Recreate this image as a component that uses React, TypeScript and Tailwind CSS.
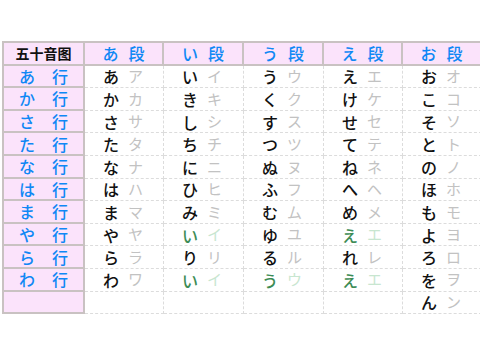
import React from 'react';

type Kana = { h: string; k: string; green?: boolean } | null;

const dan = ['あ', 'い', 'う', 'え', 'お'];
const gyo = ['あ', 'か', 'さ', 'た', 'な', 'は', 'ま', 'や', 'ら', 'わ', ''];

const rows: Kana[][] = [
  [{ h: 'あ', k: 'ア' }, { h: 'い', k: 'イ' }, { h: 'う', k: 'ウ' }, { h: 'え', k: 'エ' }, { h: 'お', k: 'オ' }],
  [{ h: 'か', k: 'カ' }, { h: 'き', k: 'キ' }, { h: 'く', k: 'ク' }, { h: 'け', k: 'ケ' }, { h: 'こ', k: 'コ' }],
  [{ h: 'さ', k: 'サ' }, { h: 'し', k: 'シ' }, { h: 'す', k: 'ス' }, { h: 'せ', k: 'セ' }, { h: 'そ', k: 'ソ' }],
  [{ h: 'た', k: 'タ' }, { h: 'ち', k: 'チ' }, { h: 'つ', k: 'ツ' }, { h: 'て', k: 'テ' }, { h: 'と', k: 'ト' }],
  [{ h: 'な', k: 'ナ' }, { h: 'に', k: 'ニ' }, { h: 'ぬ', k: 'ヌ' }, { h: 'ね', k: 'ネ' }, { h: 'の', k: 'ノ' }],
  [{ h: 'は', k: 'ハ' }, { h: 'ひ', k: 'ヒ' }, { h: 'ふ', k: 'フ' }, { h: 'へ', k: 'ヘ' }, { h: 'ほ', k: 'ホ' }],
  [{ h: 'ま', k: 'マ' }, { h: 'み', k: 'ミ' }, { h: 'む', k: 'ム' }, { h: 'め', k: 'メ' }, { h: 'も', k: 'モ' }],
  [{ h: 'や', k: 'ヤ' }, { h: 'い', k: 'イ', green: true }, { h: 'ゆ', k: 'ユ' }, { h: 'え', k: 'エ', green: true }, { h: 'よ', k: 'ヨ' }],
  [{ h: 'ら', k: 'ラ' }, { h: 'り', k: 'リ' }, { h: 'る', k: 'ル' }, { h: 'れ', k: 'レ' }, { h: 'ろ', k: 'ロ' }],
  [{ h: 'わ', k: 'ワ' }, { h: 'い', k: 'イ', green: true }, { h: 'う', k: 'ウ', green: true }, { h: 'え', k: 'エ', green: true }, { h: 'を', k: 'ヲ' }],
  [null, null, null, null, { h: 'ん', k: 'ン' }],
];

const font = "font-['Noto_Sans_CJK_JP','Noto_Sans_CJK_SC',sans-serif]";

const pink = 'bg-[#fbe3fb] border-b-2 border-r-2 border-[#c9c2c2] flex items-center justify-center';
const plain = 'bg-white border-b border-r border-dashed border-[#dcdcdc] flex items-center pl-[18px]';

export default function App() {
  return (
    <div className={`w-[480px] h-[360px] bg-white overflow-hidden pt-[41px] pl-[2px] ${font}`}>
      <div className="grid grid-cols-[81px_79px_80px_80px_79px_79px] auto-rows-[22.6px] border-t-2 border-l-2 border-[#c9c2c2]">
        <div className={`${pink} text-[14px] font-bold text-[#111]`}>五十音图</div>
        {dan.map((d) => (
          <div key={d} className={`${pink} gap-[10px] text-[16px] font-medium text-[#0f88f5]`}>
            <span>{d}</span>
            <span>段</span>
          </div>
        ))}
        {rows.map((row, i) => (
          <React.Fragment key={i}>
            <div className={`${pink} gap-[17px] text-[16px] font-medium text-[#0f88f5]`}>
              {gyo[i] && (
                <>
                  <span>{gyo[i]}</span>
                  <span>行</span>
                </>
              )}
            </div>
            {row.map((c, j) => (
              <div key={j} className={`${plain} gap-[9px]`}>
                {c && (
                  <>
                    <span className={`text-[16px] font-medium ${c.green ? 'text-[#3d8c55]' : 'text-[#111]'}`}>{c.h}</span>
                    <span className={`text-[15px] ${c.green ? 'text-[#c8e6d0]' : 'text-[#c2c2c2]'}`}>{c.k}</span>
                  </>
                )}
              </div>
            ))}
          </React.Fragment>
        ))}
      </div>
    </div>
  );
}
